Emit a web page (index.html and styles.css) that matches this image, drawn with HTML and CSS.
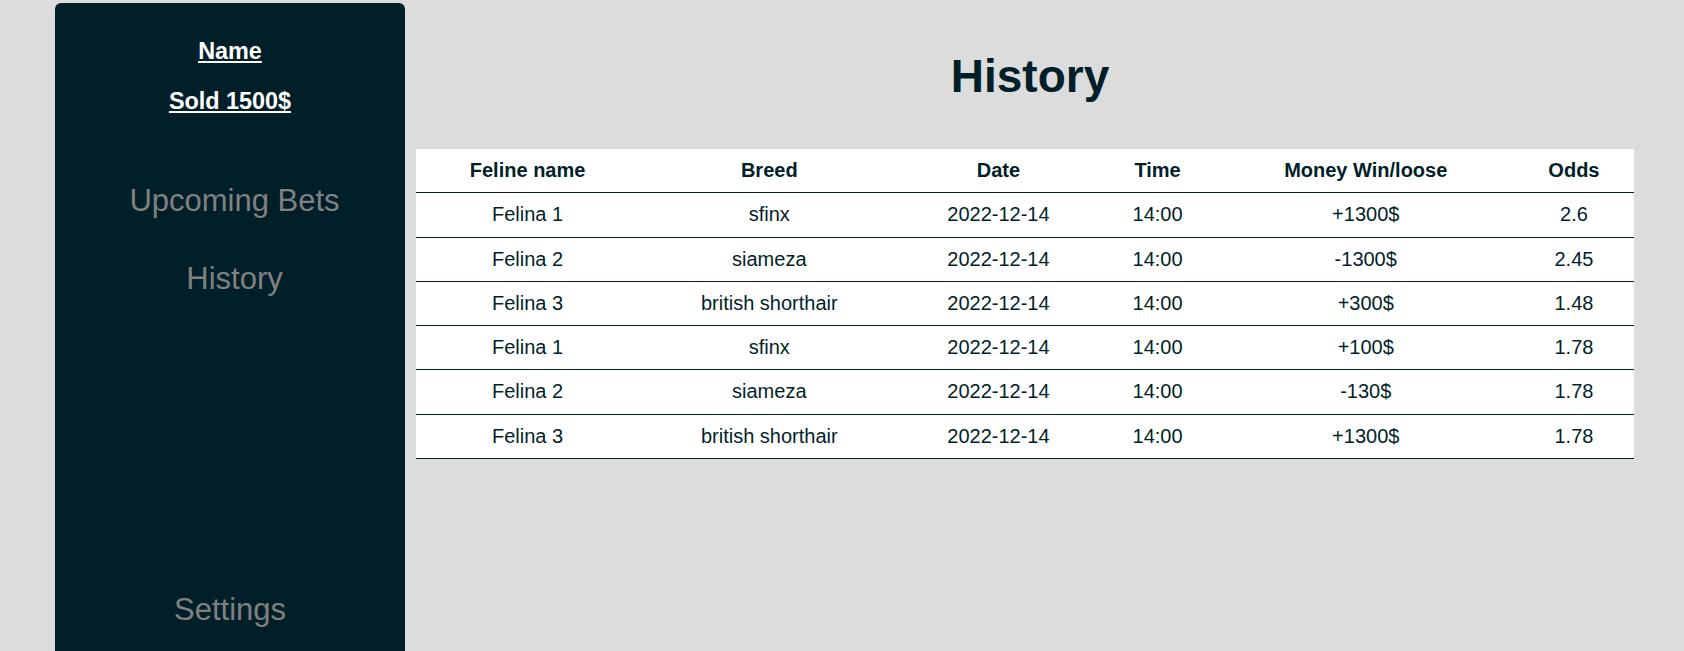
FILE: index.html
```html
<!DOCTYPE html>
<html lang="en">
<head>
<meta charset="utf-8">
<title>History</title>
<link rel="stylesheet" href="styles.css">
</head>
<body>
<div class="page">
  <aside class="sidebar">
    <div class="profile">
      <h3 class="profile-line"><a href="#">Name</a></h3>
      <h3 class="profile-line"><a href="#">Sold 1500$</a></h3>
    </div>
    <nav class="nav">
      <a class="nav-link" href="#">Upcoming Bets</a>
      <a class="nav-link" href="#">History</a>
    </nav>
    <a class="nav-link settings" href="#">Settings</a>
  </aside>
  <main class="main">
    <h1 class="title">History</h1>
    <table class="history">
      <thead>
        <tr>
          <th>Feline name</th>
          <th>Breed</th>
          <th>Date</th>
          <th>Time</th>
          <th>Money Win/loose</th>
          <th>Odds</th>
        </tr>
      </thead>
      <tbody>
        <tr><td>Felina 1</td><td>sfinx</td><td>2022-12-14</td><td>14:00</td><td>+1300$</td><td>2.6</td></tr>
        <tr><td>Felina 2</td><td>siameza</td><td>2022-12-14</td><td>14:00</td><td>-1300$</td><td>2.45</td></tr>
        <tr><td>Felina 3</td><td>british shorthair</td><td>2022-12-14</td><td>14:00</td><td>+300$</td><td>1.48</td></tr>
        <tr><td>Felina 1</td><td>sfinx</td><td>2022-12-14</td><td>14:00</td><td>+100$</td><td>1.78</td></tr>
        <tr><td>Felina 2</td><td>siameza</td><td>2022-12-14</td><td>14:00</td><td>-130$</td><td>1.78</td></tr>
        <tr><td>Felina 3</td><td>british shorthair</td><td>2022-12-14</td><td>14:00</td><td>+1300$</td><td>1.78</td></tr>
      </tbody>
    </table>
  </main>
</div>
</body>
</html>
```
FILE: styles.css
```css
html, body {
  margin: 0;
  padding: 0;
  height: 100%;
  overflow: hidden;
}

body {
  background: #dcdcdc;
  font-family: "Liberation Sans", Arial, sans-serif;
  font-size: 20px;
  color: #011f29;
}

.page {
  display: flex;
  align-items: flex-start;
  padding-top: 3px;
  height: 100%;
  box-sizing: border-box;
}

.sidebar {
  flex: 0 0 350px;
  margin-left: 55px;
  height: 100%;
  box-sizing: border-box;
  background: #011f29;
  border-radius: 6px 6px 0 0;
  display: flex;
  flex-direction: column;
  align-items: center;
  padding: 35px 0 21px;
}

.profile {
  display: flex;
  flex-direction: column;
  align-items: center;
  gap: 23.4px;
}

.profile-line {
  margin: 0;
  font-size: 23.4px;
  line-height: 27px;
  font-weight: bold;
}

.profile-line a {
  color: #ffffff;
  text-decoration: underline;
}

.nav {
  display: flex;
  flex-direction: column;
  align-items: center;
  gap: 38px;
  margin-top: 66px;
  padding-left: 9px;
}

.nav-link {
  color: #808080;
  text-decoration: none;
  font-size: 31px;
  line-height: 40px;
}

.settings {
  margin-top: auto;
}

.main {
  flex: 1;
  min-width: 0;
  padding: 47px 50px 0 11px;
}

.title {
  margin: 0;
  padding-left: 10px;
  text-align: center;
  font-size: 46px;
  line-height: 53px;
  font-weight: bold;
  color: #011f29;
}

.history {
  margin-top: 46px;
  width: 100%;
  table-layout: fixed;
  border-collapse: collapse;
  background: #ffffff;
  color: #011f29;
}

.history th,
.history td {
  padding: 10px 0;
  line-height: 23.3px;
  text-align: center;
  border-bottom: 1px solid #011f29;
  white-space: nowrap;
}

.history th {
  font-weight: bold;
}

.history th:nth-child(1) { width: 223px; }
.history th:nth-child(2) { width: 260px; }
.history th:nth-child(3) { width: 198px; }
.history th:nth-child(4) { width: 120px; }
.history th:nth-child(5) { width: 296px; }
.history th:nth-child(6) { width: 120px; }
```
